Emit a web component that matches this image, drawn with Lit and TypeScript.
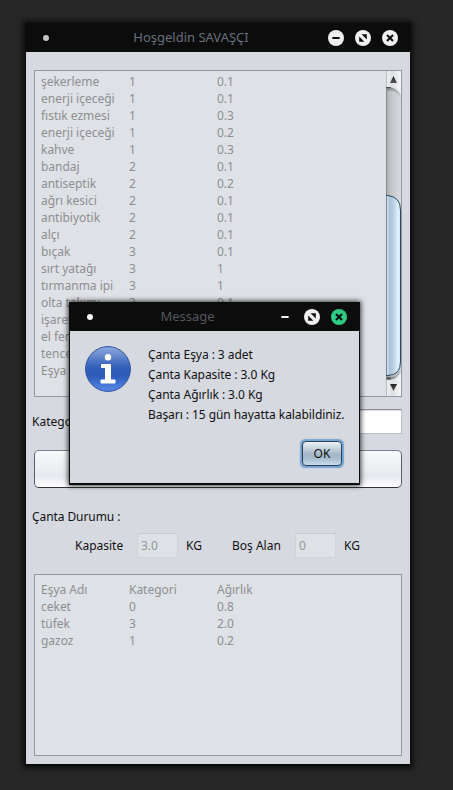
import { LitElement, html, svg, css } from "lit";
import { customElement, property } from "lit/decorators.js";

type Row = [string, string, string];

const ITEMS: Row[] = [
  ["şekerleme", "1", "0.1"],
  ["enerji içeceği", "1", "0.1"],
  ["fıstık ezmesi", "1", "0.3"],
  ["enerji içeceği", "1", "0.2"],
  ["kahve", "1", "0.3"],
  ["bandaj", "2", "0.1"],
  ["antiseptik", "2", "0.2"],
  ["ağrı kesici", "2", "0.1"],
  ["antibiyotik", "2", "0.1"],
  ["alçı", "2", "0.1"],
  ["bıçak", "3", "0.1"],
  ["sırt yatağı", "3", "1"],
  ["tırmanma ipi", "3", "1"],
  ["olta takımı", "3", "0.1"],
  ["işaret", "", ""],
  ["el feneri", "", ""],
  ["tencere", "", ""],
  ["Eşya", "", ""],
];

const BAG: Row[] = [
  ["Eşya Adı", "Kategori", "Ağırlık"],
  ["ceket", "0", "0.8"],
  ["tüfek", "3", "2.0"],
  ["gazoz", "1", "0.2"],
];

const MESSAGE = [
  "Çanta Eşya : 3 adet",
  "Çanta Kapasite : 3.0 Kg",
  "Çanta Ağırlık : 3.0 Kg",
  "Başarı : 15 gün hayatta kalabildiniz.",
];

@customElement("title-bar")
export class TitleBar extends LitElement {
  @property() heading = "";
  @property({ type: Boolean, reflect: true }) active = false;

  static styles = css`
    :host {
      display: flex;
      position: relative;
      box-sizing: border-box;
      height: 29px;
      align-items: center;
      justify-content: space-between;
      padding: 0 13px 0 18px;
      background: #0c0c0c;
      color: #67707c;
      font: 13px/29px "Noto Sans", sans-serif;
    }
    :host([active]) { color: #53575e; }
    .dot { width: 6px; height: 6px; border-radius: 50%; background: #c4c4c4; }
    :host([active]) .dot { background: #f4f4f4; }
    .heading { position: absolute; left: 0; right: 24px; top: 0; text-align: center; padding-right: 30px; }
    .buttons { display: flex; gap: 11px; }
    svg { display: block; width: 16px; height: 16px; }
  `;

  render() {
    const face = "#f0f0f0";
    return html`
      <span class="dot"></span>
      <span class="heading">${this.heading}</span>
      <div class="buttons">
        <svg viewBox="0 0 16 16">
          ${this.active ? null : svg`<circle cx="8" cy="8" r="8" fill=${face} />`}
          <rect x="4.3" y="7" width="7.4" height="2" rx=".5" fill=${this.active ? face : "#0c0c0c"} />
        </svg>
        <svg viewBox="0 0 16 16">
          <circle cx="8" cy="8" r="8" fill=${face} />
          <path d="M6.6 4.2H11.8V9.4ZM4.2 6.6V11.8H9.4Z" fill="#0c0c0c" />
        </svg>
        <svg viewBox="0 0 16 16">
          <circle cx="8" cy="8" r="8" fill=${this.active ? "#2ecc80" : face} />
          <path d="M5 5L11 11M11 5L5 11" stroke="#0c0c0c" stroke-width="2" />
        </svg>
      </div>
    `;
  }
}

@customElement("item-table")
export class ItemTable extends LitElement {
  @property({ attribute: false }) rows: Row[] = [];

  static styles = css`
    :host { display: block; color: #8e8f91; font: 12px/17px "Noto Sans", sans-serif; letter-spacing: -0.02px; }
    .row { display: grid; grid-template-columns: 88px 88px 1fr; height: 17px; white-space: nowrap; }
  `;

  render() {
    return this.rows.map(
      (r) => html`<div class="row">${r.map((c) => html`<span>${c}</span>`)}</div>`
    );
  }
}

@customElement("scroll-bar")
export class ScrollBar extends LitElement {
  static styles = css`
    :host { display: block; width: 15px; height: 325px; }
    svg { display: block; }
  `;

  render() {
    return html`
      <svg width="15" height="325" viewBox="0 0 15 325">
        <defs>
          <linearGradient id="track"><stop offset="0" stop-color="#9c9da2" /><stop offset=".12" stop-color="#b6b7bb" /><stop offset=".5" stop-color="#cbccd0" /><stop offset="1" stop-color="#d8dae1" /></linearGradient>
          <linearGradient id="cap"><stop offset="0" stop-color="#f2f3f5" /><stop offset=".4" stop-color="#dcdee1" /><stop offset="1" stop-color="#f5f6f7" /></linearGradient>
          <linearGradient id="thumb"><stop offset="0" stop-color="#a9bfd3" /><stop offset=".12" stop-color="#d5e2ed" /><stop offset=".22" stop-color="#aac1d7" /><stop offset=".5" stop-color="#b9d0e4" /><stop offset=".85" stop-color="#e0f3ff" /><stop offset="1" stop-color="#c9e3f5" /></linearGradient>
          <linearGradient id="arrow" x2="0" y2="1"><stop offset="0" stop-color="#222" /><stop offset="1" stop-color="#555" /></linearGradient>
          <linearGradient id="edge"><stop offset="0" stop-color="#3c3e42" /><stop offset=".5" stop-color="#77797e" /><stop offset="1" stop-color="#b9bbc1" /></linearGradient>
          <filter id="soft" x="-30%" y="-30%" width="160%" height="160%"><feGaussianBlur stdDeviation="1" /></filter>
        </defs>
        <rect width="15" height="325" fill="url(#track)" />
        <path d="M0 17.5H4Q10 17.5 14 24" fill="none" stroke="url(#edge)" stroke-width="2" filter="url(#soft)" />
        <path d="M0 308H4Q11 308 14 300" fill="none" stroke="url(#edge)" stroke-width="2.5" filter="url(#soft)" />
        <path d="M0 0H15V24Q11 16.5 4 16.5H0Z" fill="url(#cap)" />
        <path d="M0 325H15V301Q11 308.5 4 308.5H0Z" fill="url(#cap)" />
        <path d="M0 16.5H5" stroke="#4d4f53" />
        <path d="M0 307.5H5" stroke="#4d4f53" stroke-width="2" />
        <path d="M0 124.5H2Q14.5 126 14.5 139V291Q14.5 304 2 304.5H0Z" fill="url(#thumb)" stroke="#2d4a62" />
        <path d="M.5 17V124M.5 305V308" stroke="#85868b" />
        <path d="M.5 0V16M.5 309V325" stroke="#b8babf" />
        <path d="M7.5 5L11 12H4Z" fill="url(#arrow)" />
        <path d="M7.5 320L11 313H4Z" fill="url(#arrow)" />
      </svg>
    `;
  }
}

@customElement("message-dialog")
export class MessageDialog extends LitElement {
  static styles = css`
    :host {
      display: block;
      box-sizing: border-box;
      width: 291px;
      height: 183px;
      background: #d6d9e0;
      border: solid #0c0c0c;
      border-width: 0 1px 2px;
      box-shadow: 0 0 5px 1px rgba(0, 0, 0, 0.75);
      color: #111;
      font: 12px/20px "Noto Sans", sans-serif;
    }
    title-bar { margin: 0 -1px; }
    .body { display: flex; gap: 16px; padding: 14px 0 0 14px; }
    .info { flex: none; width: 48px; height: 48px; }
    .lines { white-space: nowrap; letter-spacing: -0.06px; }
    .actions { display: flex; justify-content: flex-end; padding: 16px 17px 0 0; }
    button {
      box-sizing: border-box;
      width: 40px;
      height: 25px;
      padding: 0;
      border: 1px solid #2c4158;
      border-radius: 4px;
      background: linear-gradient(#eef1f5 0, #c8d3de 28%, #a3b6c8 55%, #a9bdcf 72%, #c6dbed 100%);
      box-shadow: 0 0 0 1px #73a4d1, 0 0 1px 1.5px #73a4d1;
      color: #111;
      font: 12px/20px "Noto Sans", sans-serif;
    }
  `;

  render() {
    return html`
      <title-bar active heading="Message"></title-bar>
      <div class="body">
        <svg class="info" viewBox="0 0 48 48">
          <defs><linearGradient id="blue" x2="0" y2="1"><stop offset="0" stop-color="#8fa9df" /><stop offset=".45" stop-color="#3560b9" /><stop offset=".65" stop-color="#2c5ab8" /><stop offset="1" stop-color="#5a8cec" /></linearGradient></defs>
          <circle cx="24" cy="24" r="22.4" fill="url(#blue)" stroke="#2a509c" />
          <circle cx="24" cy="12.2" r="3.2" fill="#fff" />
          <path d="M17.5 19.5H26.5V35H31V38H17V35H21.5V22.5H17.5Z" fill="#fff" stroke="#fff" stroke-linejoin="round" />
        </svg>
        <div class="lines">${MESSAGE.map((m) => html`<div>${m}</div>`)}</div>
      </div>
      <div class="actions"><button>OK</button></div>
    `;
  }
}

@customElement("app-root")
export class AppRoot extends LitElement {
  static styles = css`
    :host {
      display: block;
      position: relative;
      box-sizing: border-box;
      width: 453px;
      height: 790px;
      padding: 23px 0 0 25px;
      overflow: hidden;
      background: #272727;
      color: #111;
      font: 12px/17px "Noto Sans", sans-serif;
    }
    .window {
      box-sizing: border-box;
      width: 386px;
      height: 743px;
      border: solid #0c0c0c;
      border-width: 0 1px 2px;
      background: #d6d9e0;
      box-shadow: 0 0 6px 2px rgba(0, 0, 0, 0.7);
    }
    .window > title-bar { margin: 0 -1px; }
    .content { padding: 18px 8px 0; }
    .panel { box-sizing: border-box; border: 1px solid #9297a1; background: #dee1e6; }
    .items { display: flex; justify-content: space-between; height: 327px; }
    .items item-table { padding: 2px 0 0 6px; }
    .category { display: flex; height: 25px; margin: 12px 0 0 -2px; align-items: center; justify-content: space-between; }
    .entry { box-sizing: border-box; width: 220px; height: 25px; border: 1px solid #bcbec3; border-top-color: #8d8f94; background: #fff; box-shadow: inset 0 1px #d9dadd; }
    .wide {
      display: block;
      box-sizing: border-box;
      width: 368px;
      height: 38px;
      margin-top: 16px;
      border: 1px solid #5b5e66;
      border-top-color: #7c7f87;
      border-bottom-color: #30333a;
      border-radius: 5px;
      background: linear-gradient(#f8f9fb 0, #edeff3 45%, #e7e9ef 70%, #fff 100%);
    }
    .status { margin: 20px 0 0 -2px; letter-spacing: -0.08px; }
    .stats { display: flex; height: 25px; margin: 8px 0 0 41px; line-height: 25px; }
    .field { box-sizing: border-box; width: 41px; height: 25px; border: 1px solid #cfd2d7; border-top-color: #c7cace; background: #dee1e6; color: #949699; padding-left: 3px; line-height: 23px; }
    .capacity { width: 62px; }
    .unit { width: 54px; padding-left: 8px; box-sizing: border-box; }
    .free { width: 63px; }
    .bag { height: 182px; margin-top: 16px; padding: 6px 0 0 6px; }
    message-dialog { position: absolute; left: 69px; top: 302px; }
  `;

  render() {
    return html`
      <div class="window">
        <title-bar heading="Hoşgeldin SAVAŞÇI"></title-bar>
        <div class="content">
          <div class="panel items">
            <item-table .rows=${ITEMS}></item-table>
            <scroll-bar></scroll-bar>
          </div>
          <div class="category"><span>Kategori</span><div class="entry"></div></div>
          <button class="wide"></button>
          <div class="status">Çanta Durumu :</div>
          <div class="stats">
            <span class="capacity">Kapasite</span>
            <div class="field">3.0</div>
            <span class="unit">KG</span>
            <span class="free">Boş Alan</span>
            <div class="field">0</div>
            <span class="unit">KG</span>
          </div>
          <div class="panel bag"><item-table .rows=${BAG}></item-table></div>
        </div>
      </div>
      <message-dialog></message-dialog>
    `;
  }
}
